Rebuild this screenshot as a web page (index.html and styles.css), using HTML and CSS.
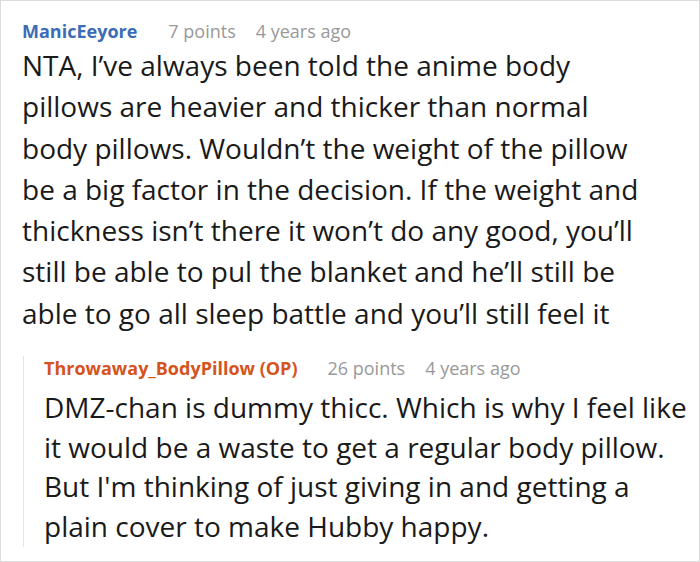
FILE: index.html
```html
<!DOCTYPE html>
<html>
<head>
<meta charset="utf-8">
<link rel="stylesheet" href="styles.css">
</head>
<body>
<div class="card">
  <div class="comment">
    <div class="meta">
      <span class="user">ManicEeyore</span>
      <span class="info">7 points</span>
      <span class="info">4 years ago</span>
    </div>
    <p class="text">NTA, I’ve always been told the anime body<br>pillows are heavier and thicker than normal<br>body pillows. Wouldn’t the weight of the pillow<br>be a big factor in the decision. If the weight and<br>thickness isn’t there it won’t do any good, you’ll<br>still be able to pul the blanket and he’ll still be<br>able to go all sleep battle and you’ll still feel it</p>
  </div>
  <div class="reply">
    <div class="meta reply-meta">
      <span class="user op">Throwaway_BodyPillow (OP)</span>
      <span class="info">26 points</span>
      <span class="info">4 years ago</span>
    </div>
    <p class="text reply-text">DMZ-chan is dummy thicc. Which is why I feel like<br>it would be a waste to get a regular body pillow.<br>But I'm thinking of just giving in and getting a<br>plain cover to make Hubby happy.</p>
  </div>
</div>
</body>
</html>
```

FILE: styles.css
```css
html, body {
  margin: 0;
  padding: 0;
  background: #fff;
}
.card {
  box-sizing: border-box;
  width: 700px;
  height: 562px;
  border: 1px solid #dcdcdc;
  padding: 18px 0 0 21px;
  overflow: hidden;
  font-family: "Open Sans", "Noto Sans", sans-serif;
  color: #1a1a1a;
}
.meta {
  display: flex;
  align-items: baseline;
  font-size: 18px;
  line-height: 24px;
  white-space: nowrap;
}
.user {
  font-weight: 700;
  color: #3b6cb8;
  margin-right: 31px;
}
.user.op {
  color: #d5541d;
  margin-right: 30px;
}
.info {
  color: #999;
  margin-right: 20px;
}
.text {
  margin: 2px 0 0 0;
  font-size: 28px;
  line-height: 41.3px;
  white-space: nowrap;
}
.reply {
  margin: 34px 0 0 1px;
  border-left: 1px solid #e3e3e3;
  padding-left: 20px;
}
.reply-meta {
  margin-top: -12px;
}
.reply-text {
  margin: 8px 0 -3px 0;
  line-height: 39.7px;
}
```
